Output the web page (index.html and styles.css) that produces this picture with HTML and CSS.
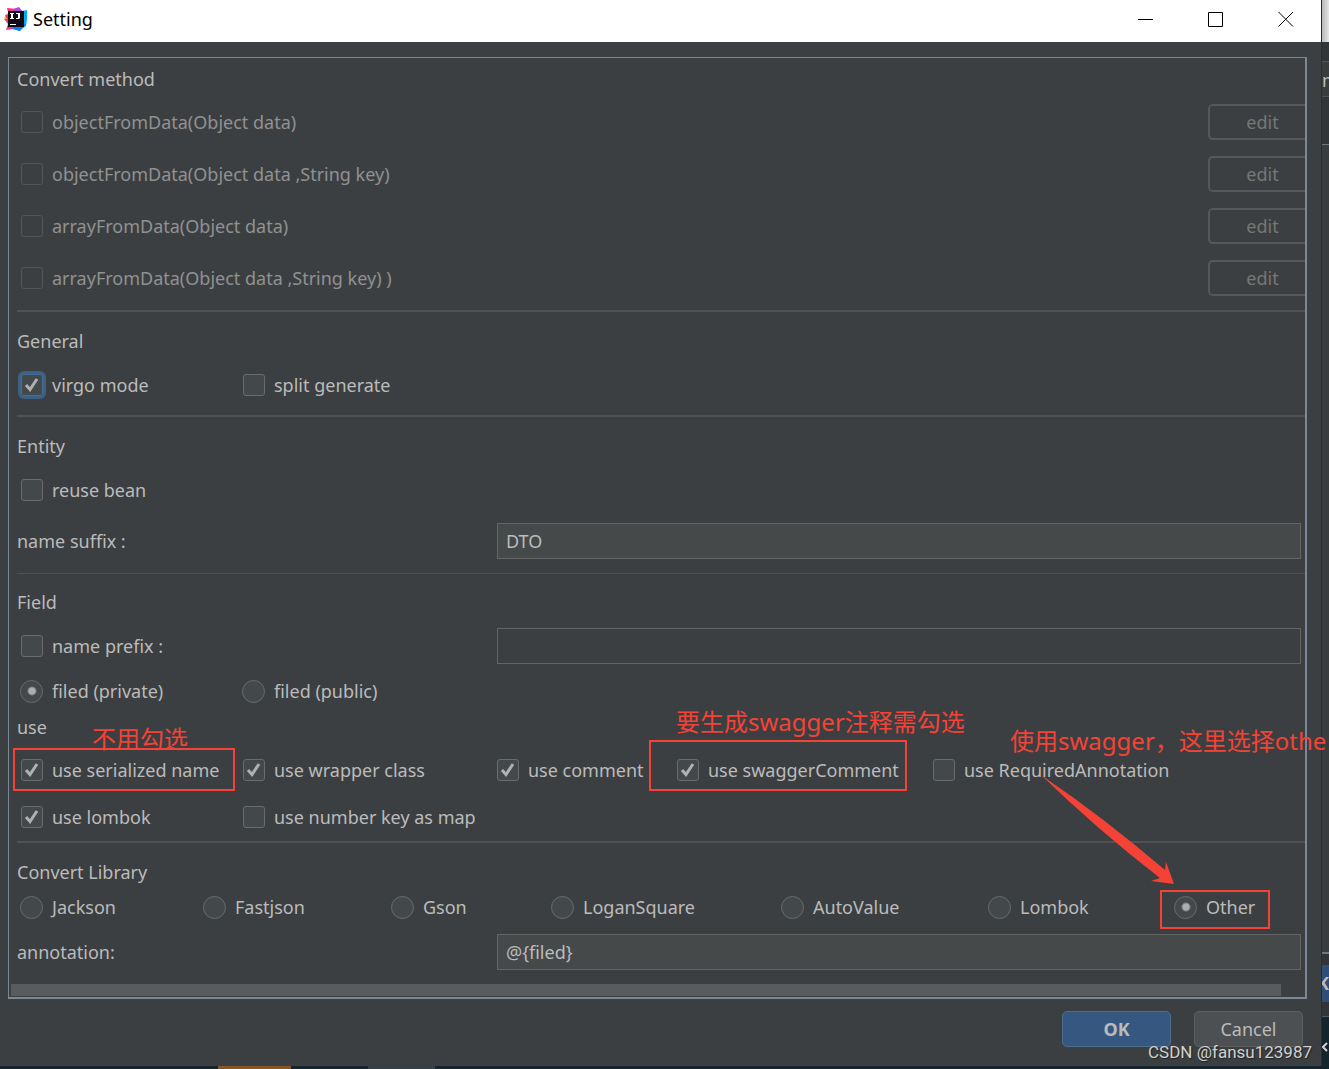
FILE: index.html
```
<!DOCTYPE html>
<html lang="en">
<head>
<meta charset="utf-8">
<title>Setting</title>
<link rel="stylesheet" href="styles.css">
</head>
<body>
<div class="desktop">
  <div class="dialog">
    <header class="titlebar">
      <svg class="logo" viewBox="0 0 24 24" aria-hidden="true">
        <path d="M0 11 4 6 3 1 10 3 12 12 4 15z" fill="#fdb60d"/>
        <path d="M3 1 12 2 12 10 4 14 1 8 5 7z" fill="#fe2d76"/>
        <path d="M14 1 18 4 23 3 23 12 22 19 15 24 8 20z" fill="#07a9fb"/>
        <path d="M9 2 15 0 19 5 12 8z" fill="#b14ad8"/>
        <path d="M0 12 12 12 15 20 9 22 2 23 4 17z" fill="#fc318c"/>
        <path d="M11 18 22 17 16 24 8 22z" fill="#087cfa"/>
        <path d="M4 4h16v16H4z" fill="#120a12"/>
        <path d="M6 6h4v1H9v4h1v1H6v-1h1V7H6zM12 6h4v5l-1 1h-3v-1h2V7h-2zM6 17h6v1H6z" fill="#fff"/>
      </svg>
      <h1 class="title">Setting</h1>
      <div class="window-buttons">
        <button class="window-button" aria-label="Minimize"><svg viewBox="0 0 16 16"><path d="M0 8.500h15"/></svg></button>
        <button class="window-button" aria-label="Maximize"><svg viewBox="0 0 16 16"><path d="M.5 1.500h14v14H.5z"/></svg></button>
        <button class="window-button" aria-label="Close"><svg viewBox="0 0 16 16"><path d="M.5 1 15 15.500M15 1 .5 15.500"/></svg></button>
      </div>
    </header>

    <form class="content">
      <div class="panel">
        <section class="section first">
          <h2 class="heading">Convert method</h2>
          <div class="row method"><label class="option"><input type="checkbox" disabled>objectFromData(Object data)</label><button type="button" class="button edit" disabled>edit</button></div>
          <div class="row method"><label class="option"><input type="checkbox" disabled>objectFromData(Object data ,String key)</label><button type="button" class="button edit" disabled>edit</button></div>
          <div class="row method"><label class="option"><input type="checkbox" disabled>arrayFromData(Object data)</label><button type="button" class="button edit" disabled>edit</button></div>
          <div class="row method"><label class="option"><input type="checkbox" disabled>arrayFromData(Object data ,String key) )</label><button type="button" class="button edit" disabled>edit</button></div>
        </section>

        <section class="section general">
          <h2 class="heading">General</h2>
          <div class="row lead columns">
            <label class="option"><input type="checkbox" class="focused" checked>virgo mode</label>
            <label class="option"><input type="checkbox">split generate</label>
          </div>
        </section>

        <section class="section entity">
          <h2 class="heading">Entity</h2>
          <div class="row lead columns">
            <label class="option"><input type="checkbox">reuse bean</label>
          </div>
          <div class="row field">
            <label for="suffix">name suffix :</label>
            <input class="text" id="suffix" type="text" value="DTO">
          </div>
        </section>

        <section class="section fields">
          <h2 class="heading">Field</h2>
          <div class="row lead field">
            <label class="option"><input type="checkbox">name prefix :</label>
            <input class="text empty" type="text" aria-label="name prefix">
          </div>
          <div class="row access columns">
            <label class="option"><input type="radio" name="access" checked>filed (private)</label>
            <label class="option"><input type="radio" name="access">filed (public)</label>
          </div>
          <div class="row short">use</div>
          <div class="row use columns">
            <label class="option"><input type="checkbox" checked>use serialized name</label>
            <label class="option"><input type="checkbox" checked>use wrapper class</label>
            <label class="option"><input type="checkbox" checked>use comment</label>
            <label class="option"><input type="checkbox" checked>use swaggerComment</label>
            <label class="option"><input type="checkbox">use RequiredAnnotation</label>
          </div>
          <div class="row use columns">
            <label class="option"><input type="checkbox" checked>use lombok</label>
            <label class="option"><input type="checkbox">use number key as map</label>
          </div>
        </section>

        <section class="section">
          <h2 class="heading">Convert Library</h2>
          <div class="row short libraries">
            <label class="option"><input type="radio" name="library">Jackson</label>
            <label class="option"><input type="radio" name="library">Fastjson</label>
            <label class="option"><input type="radio" name="library">Gson</label>
            <label class="option"><input type="radio" name="library">LoganSquare</label>
            <label class="option"><input type="radio" name="library">AutoValue</label>
            <label class="option"><input type="radio" name="library">Lombok</label>
            <label class="option"><input type="radio" name="library" checked>Other</label>
          </div>
          <div class="row field annotation">
            <label for="annotation">annotation:</label>
            <input class="text" id="annotation" type="text" value="@{filed}">
          </div>
        </section>
        <div class="scrollbar"><div class="thumb"></div></div>
      </div>
      <footer class="actions">
        <button type="button" class="button primary">OK</button>
        <button type="button" class="button">Cancel</button>
      </footer>
    </form>
  </div>

  <aside class="behind" aria-hidden="true">
    <div class="behind-title"></div>
    <div class="behind-field">m</div>
    <div class="behind-body"></div>
    <div class="behind-footer"><div class="behind-ok">K</div></div>
    <div class="behind-dock"><svg viewBox="0 0 8 12"><path d="M5 2 1 6l4 4"/></svg></div>
  </aside>
  <div class="taskbar"><span class="task active"></span><span class="task"></span></div>

  <!-- hand-drawn notes over the dialog -->
  <div class="notes" lang="zh">
    <span class="box box-serialized"></span>
    <span class="box box-swagger"></span>
    <span class="box box-other"></span>
    <span class="note note-serialized">不用勾选</span>
    <span class="note note-swagger">要生成swagger注释需勾选</span>
    <span class="note note-other">使用swagger，这里选择othe</span>
    <svg class="arrow" viewBox="0 0 136 114"><path d="M0 0Q62 42 124 95L125 87 133 109 110 106 119 103Q58 56 0 0z"/></svg>
    <span class="watermark">CSDN @fansu123987</span>
  </div>
</div>
</body>
</html>
```
FILE: styles.css
```
* { box-sizing: border-box; }

body {
  margin: 0;
  background: #3c3f41;
  color: #bbbbbb;
  font: 18px/24px "Noto Sans", "Noto Sans CJK SC", sans-serif;
}

.desktop {
  position: relative;
  display: grid;
  grid-template-columns: minmax(0, 1fr) 8px;
  grid-template-rows: 1fr 3px;
  min-height: 100vh;
  overflow: hidden;
}

.dialog { display: flex; flex-direction: column; }

/* title bar */
.titlebar {
  display: flex;
  align-items: center;
  height: 42px;
  padding: 0 0 4px 4px;
  background: #ffffff;
  color: #000000;
}
.logo { width: 24px; height: 24px; margin-right: 5px; }
.title { flex: 1; margin: 0; font-size: 18px; font-weight: 400; }
.window-buttons { display: flex; }
.window-button {
  width: 70px;
  height: 38px;
  padding: 0;
  border: 0;
  background: none;
}
.window-button svg { display: block; width: 16px; height: 16px; margin: 0 auto; fill: none; stroke: #000000; }

/* scrolling panel */
.content { display: flex; flex: 1; flex-direction: column; padding: 15px 14px 18px 8px; }
.panel {
  overflow: hidden;
  border: solid #7b8794;
  border-width: 1px 2px 2px 1px;
}

.section { margin-left: 8px; padding-top: 14px; border-top: 2px solid #515151; }
.section.first { padding: 6px 0; border-top: 0; }
.first .heading { margin-bottom: 1px; }
.general { padding-bottom: 2px; }
.entity { padding-bottom: 9px; }
.fields { border-top-width: 1px; padding: 13px 0 1px; }

.heading { margin: 0; font-size: 18px; font-weight: 400; line-height: 31px; }

.row { display: flex; align-items: center; height: 46px; }
.method { justify-content: space-between; height: 52px; }
.lead { height: 56px; }
.access { height: 34px; }
.short { height: 38px; }
.use { height: 47px; }
.annotation { height: 52px; }

.columns { display: grid; grid-template-columns: 222px 254px 180px 256px 1fr; }
.libraries { display: grid; grid-template-columns: 183px 188px 160px 230px 207px 186px 1fr; }
.field { display: grid; grid-template-columns: 480px 1fr; padding-right: 4px; }

.option { display: flex; align-items: center; gap: 9px; padding-left: 4px; white-space: nowrap; }
.option:has(:disabled) { color: #919191; }
.option:has([type="radio"]) { padding-left: 3px; }

input[type="checkbox"],
input[type="radio"] {
  flex: none;
  width: 22px;
  height: 22px;
  margin: 0;
  appearance: none;
  border: 1px solid #6b6b6b;
  border-radius: 3px;
  background: #43494a center / 20px 20px no-repeat;
}
input[type="radio"] { width: 23px; height: 23px; border-radius: 50%; }
input[type="checkbox"]:disabled { border-color: #545556; background-color: #3c3f41; }
input[type="checkbox"]:checked {
  background-image: url("data:image/svg+xml,%3Csvg xmlns='http://www.w3.org/2000/svg' viewBox='0 0 20 20'%3E%3Cpath d='M4 10 8 14.500 15 4' fill='none' stroke='%23b0b0b0' stroke-width='3'/%3E%3C/svg%3E");
}
input[type="radio"]:checked { background-image: radial-gradient(circle, #adadad 3px, transparent 5px); }
input.focused { border-color: #466d94; box-shadow: 0 0 0 3px #3d6185; }

.text {
  width: 100%;
  height: 36px;
  padding: 0 8px;
  border: 1px solid #646464;
  background: #45494a;
  color: #bbbbbb;
  font: inherit;
}
.empty { background: #3c3f41; }

.button {
  width: 109px;
  height: 36px;
  padding: 0;
  border: 1px solid #5e6060;
  border-radius: 5px;
  background: #4c5052;
  color: #bbbbbb;
  font: inherit;
}
.edit { flex: none; margin-right: -12px; border-width: 2px; border-color: #55585a; background: none; color: #777777; }
.primary { border-color: #4c708c; background: #365880; font-weight: 700; }

.scrollbar { padding: 6px 24px 1px 2px; }
.thumb { height: 12px; background: #595c5d; }

.actions { display: flex; justify-content: flex-end; gap: 23px; padding: 12px 4px 0 0; }

/* window and taskbar showing behind the dialog */
.behind { display: flex; flex-direction: column; overflow: hidden; border-left: 1px solid #2b2d2e; background: #323537; }
.behind-title { height: 42px; margin-bottom: 19px; background: linear-gradient(90deg, #b8b8b8, #e6e6e6); }
.behind-field { height: 36px; margin-bottom: 47px; border: solid #505253; border-width: 1px 0; background: #3a3d3e; line-height: 36px; }
.behind-body { flex: 1; border: solid #6c7783; border-width: 1px 0 2px; background: #3a3d3e; }
.behind-footer { height: 63px; padding-top: 11px; border-bottom: 1px solid #55585a; }
.behind-ok { display: flex; justify-content: flex-end; height: 37px; background: #2f4f78; font-weight: 700; line-height: 37px; }
.behind-dock { height: 49px; padding-top: 24px; background: #14252e; }
.behind-dock svg { display: block; width: 8px; height: 12px; fill: none; stroke: #d0d0d0; stroke-width: 2; }

.taskbar { display: flex; grid-column: 1 / -1; gap: 77px; padding-left: 218px; background: #14252f; }
.task { width: 67px; background: #35424c; }
.active { width: 73px; background: #8a5524; }

/* notes */
.notes { position: absolute; inset: 0; pointer-events: none; color: #f44336; font-size: 24px; line-height: 32px; white-space: nowrap; }
.notes > * { position: absolute; }
.box { border: 2px solid #f44336; }
.box-serialized { left: 13px; top: 748px; width: 222px; height: 43px; }
.box-swagger { left: 649px; top: 740px; width: 258px; height: 51px; }
.box-other { left: 1160px; top: 890px; width: 110px; height: 39px; }
.note-serialized { left: 92px; top: 723px; }
.note-swagger { left: 676px; top: 706px; }
.note-other { left: 1010px; top: 725px; }
.arrow { left: 1041px; top: 775px; width: 136px; height: 114px; fill: #f44336; }
.watermark { right: 17px; bottom: 5px; color: #d0d0d0; font: 17px/24px Roboto, sans-serif; text-shadow: 1px 1px 1px #222222; }
```
